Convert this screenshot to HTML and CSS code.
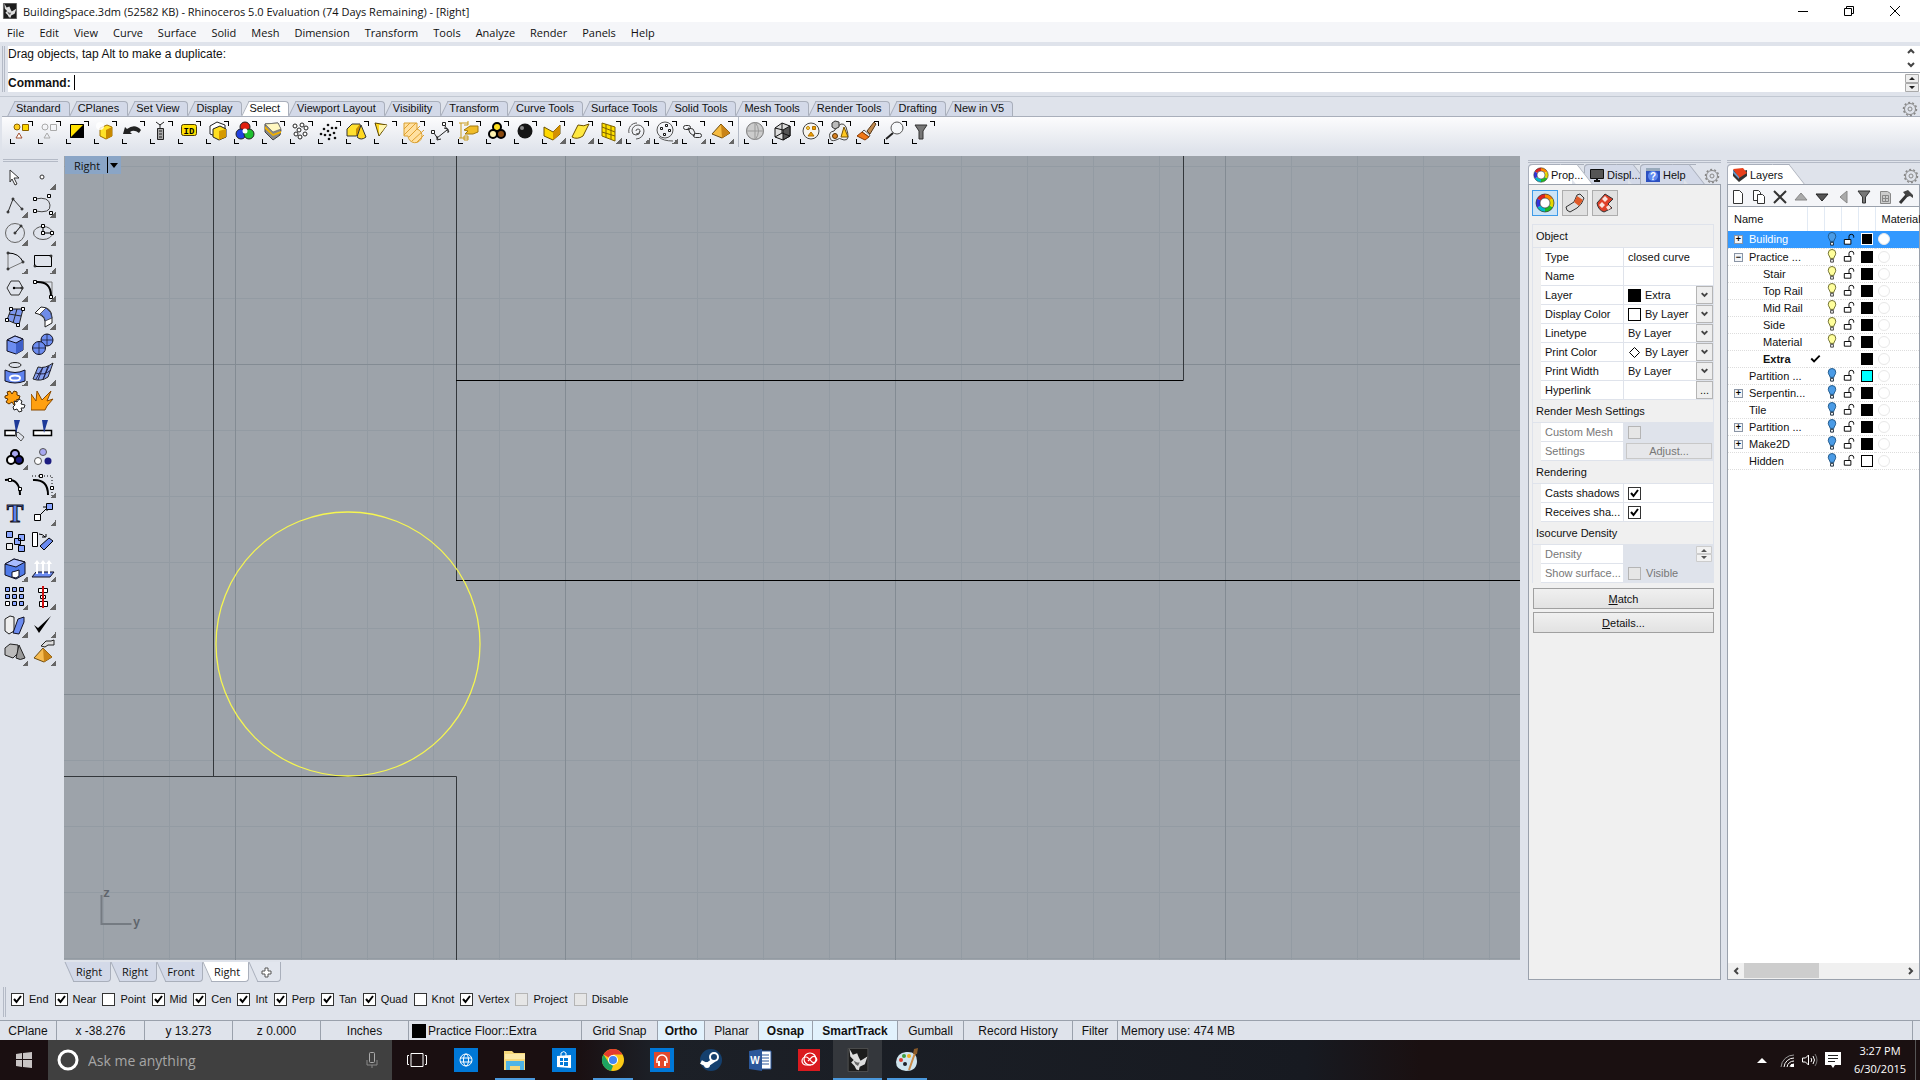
FILE: index.html
```
<!DOCTYPE html>
<html lang="en">
<head>
    <meta charset="UTF-8">
    <meta name="viewport" content="width=device-width, initial-scale=1.0">
    <title>BuildingSpace.3dm (52582 KB) - Rhinoceros 5.0 Evaluation (74 Days Remaining) - [Right]</title>
    <link rel="stylesheet" href="styles.css">
</head>
<body>
    <!-- shared symbols -->
    <svg class="defs" width="0" height="0">
        <symbol id="bulb-on" viewBox="0 0 12 16"><path d="M4 10C4 8 2 7 2 4.500a4 4 0 0 1 8 0C10 7 8 8 8 10z" fill="#ffff9c" stroke="#6b6a2a"/><path d="M4.500 11h3v3h-3z" fill="#eee" stroke="#444"/></symbol>
        <symbol id="bulb-off" viewBox="0 0 12 16"><path d="M4 10C4 8 2 7 2 4.500a4 4 0 0 1 8 0C10 7 8 8 8 10z" fill="#4a9be6" stroke="#1f5688"/><path d="M4.500 11h3v3h-3z" fill="#fff" stroke="#123"/></symbol>
        <symbol id="lock" viewBox="0 0 12 16"><path d="M1 8h7v5H1z" fill="#fff" stroke="#000"/><path d="M6 8V4.500q0-2 2.500-2t2.500 2V6" fill="none" stroke="#000"/></symbol>
        <symbol id="chevron" viewBox="0 0 16 16"><path d="M5 6l3 3 3-3" fill="none" stroke="#444" stroke-width="2"/></symbol>
        <symbol id="gear" viewBox="0 0 16 16"><circle cx="8" cy="8" r="5.500" fill="none" stroke="#888" stroke-width="1"/><circle cx="8" cy="8" r="6.500" fill="none" stroke="#888" stroke-width="1.500" stroke-dasharray="2 2"/><circle cx="8" cy="8" r="2" fill="none" stroke="#888"/></symbol>
        <symbol id="wheel" viewBox="0 0 20 20"><g fill="none" stroke-width="4"><path d="M10 3a7 7 0 0 1 6 3.500" stroke="#f80"/><path d="M16 6.500a7 7 0 0 1 0 7" stroke="#e6d800"/><path d="M16 13.500a7 7 0 0 1-6 3.500" stroke="#2b2"/><path d="M10 17a7 7 0 0 1-6-3.500" stroke="#0bc"/><path d="M4 13.500a7 7 0 0 1 0-7" stroke="#33d"/><path d="M4 6.500A7 7 0 0 1 10 3" stroke="#d22"/></g><circle cx="10" cy="10" r="9" fill="none" stroke="#333" stroke-width=".7"/><circle cx="10" cy="10" r="5" fill="#fff" stroke="#333" stroke-width=".7"/></symbol>
        <symbol id="rhino" viewBox="0 0 24 28"><path d="M.5.5h23v27H.5z" fill="#1c1c1c" stroke="#555"/><path d="M2 1l4 7 5-2 2 5 2 4 8-5-3 9-6 3-1 4-3-1-2-4-4-4 3-3-4-4z" fill="#ddd"/><path d="M7 15l4 2 3 0-2 4-3-2z" fill="#666"/></symbol>
    </svg>

    <header class="titlebar">
        <svg class="app-icon" width="16" height="16"><use href="#rhino"/></svg>
        <h1>BuildingSpace.3dm (52582 KB) - Rhinoceros 5.0 Evaluation (74 Days Remaining) - [Right]</h1>
        <div class="window-buttons">
            <button aria-label="Minimize"><svg width="12" height="12"><path d="M1 6.500h10" stroke="#000"/></svg></button>
            <button aria-label="Restore"><svg width="12" height="12"><path d="M1.500 3.500h7v7h-7zM3.500 3.500v-2h7v7h-2" fill="none" stroke="#000"/></svg></button>
            <button aria-label="Close"><svg width="12" height="12"><path d="M1 1l10 10M11 1L1 11" stroke="#000"/></svg></button>
        </div>
    </header>

    <nav class="menu">
        <a href="#">File</a><a href="#">Edit</a><a href="#">View</a><a href="#">Curve</a><a href="#">Surface</a><a href="#">Solid</a><a href="#">Mesh</a><a href="#">Dimension</a><a href="#">Transform</a><a href="#">Tools</a><a href="#">Analyze</a><a href="#">Render</a><a href="#">Panels</a><a href="#">Help</a>
    </nav>

    <section class="command">
        <div class="history">
            <span>Drag objects, tap Alt to make a duplicate:</span>
            <svg width="16" height="24"><path d="M5 7l3-3 3 3M5 17l3 3 3-3" fill="none" stroke="#444" stroke-width="2"/></svg>
        </div>
        <div class="prompt">
            <label for="cmd">Command:</label>
            <span class="caret"></span>
            <input type="text" id="cmd">
            <svg width="14" height="18"><path d="M.5.5h13v8H.5zM.5 9.500h13v8H.5z" fill="#eee" stroke="#aaa"/><path d="M4 6h6L7 3zM4 12h6l-3 3z" fill="#222"/></svg>
        </div>
    </section>

    <section class="ribbon">
        <div class="tabs">
            <button class="tab">Standard</button><button class="tab">CPlanes</button><button class="tab">Set View</button><button class="tab">Display</button><button class="tab active">Select</button><button class="tab">Viewport Layout</button><button class="tab">Visibility</button><button class="tab">Transform</button><button class="tab">Curve Tools</button><button class="tab">Surface Tools</button><button class="tab">Solid Tools</button><button class="tab">Mesh Tools</button><button class="tab">Render Tools</button><button class="tab">Drafting</button><button class="tab">New in V5</button>
            <svg class="tabs-gear" width="16" height="16"><use href="#gear"/></svg>
        </div>
        <div class="toolbar">
            <button class="tool" aria-label="All objects"><svg viewBox="0 0 28 30"><circle cx="9" cy="10" r="3" fill="#ffcf20" stroke="#8a6200"/><path d="M14.500 7.500h6v6h-6z" fill="#ffd800" stroke="#8a6200"/><path d="M11 16l3 5H8z" fill="#fff" stroke="#a05030"/></svg></button>
            <button class="tool" aria-label="None"><svg viewBox="0 0 28 30"><g fill="none" stroke="#aaa"><circle cx="9" cy="10" r="3"/><path d="M14.500 7.500h6v6h-6zM11 16l3 5H8z"/></g></svg></button>
            <button class="tool" aria-label="Invert"><svg viewBox="0 0 28 30"><path d="M6.500 7.500h13v13h-13z" fill="#ffe000" stroke="#000"/><path d="M20 7v14H6z"/></svg></button>
            <button class="tool" aria-label="Last created"><svg viewBox="0 0 28 30"><path d="M8 11l7-3 5 2v9l-6 3-6-3z" fill="#ffe228" stroke="#a07000"/><path d="M14 13l6-3v9l-6 3z" fill="#c98900"/><circle cx="8" cy="9" r="4" fill="#fff" opacity=".8"/></svg></button>
            <button class="tool" aria-label="Previous"><svg viewBox="0 0 28 30"><path d="M3 17l2-7 2 2q8-6 14 1l-2 3q-5-4-9-1l2 2z" fill="#222"/></svg></button>
            <button class="tool" aria-label="Filter"><svg viewBox="0 0 28 30"><path d="M9.500 11.500h6v11h-6z" fill="#aaa" stroke="#222"/><path d="M12 11V7M8 5l4 3 4-3M11 14h3M11 17h3M11 20h3" fill="none" stroke="#222"/></svg></button>
            <button class="tool" aria-label="By ID"><svg viewBox="0 0 28 30"><rect x="5.500" y="7.500" width="15" height="11" rx="2" fill="#ffe000" stroke="#4c3b00"/><text x="13" y="17" class="id-text">ID</text></svg></button>
            <button class="tool" aria-label="Duplicates"><svg viewBox="0 0 28 30"><path d="M6 9l7-4 8 3v9l-7 3-8-3z" fill="#fff" stroke="#222"/><path d="M9 12l7-3 6 3v8l-7 3-6-3z" fill="#ffdf20" stroke="#222"/><path d="M15 14l7-2v8l-7 3z" fill="#d59a00"/></svg></button>
            <button class="tool" aria-label="By color"><svg viewBox="0 0 28 30"><circle cx="13" cy="10" r="5" fill="#e02010" stroke="#222"/><circle cx="9" cy="17" r="5" fill="#2040e0" stroke="#222"/><circle cx="17" cy="17" r="5" fill="#20c030" stroke="#222"/><circle cx="13" cy="14" r="2.500" fill="#fff"/></svg></button>
            <button class="tool" aria-label="By layer"><svg viewBox="0 0 28 30"><path d="M5 7l13-1 3 7-1 5-7 5-8-8z" fill="#888" stroke="#444"/><path d="M5 7l8 8 8-3-3-6z" fill="#fff7c0" stroke="#666" stroke-width=".7"/><path d="M5 9l8 8 8-3v2l-8 3-8-7z" fill="#f0b000"/></svg></button>
            <button class="tool" aria-label="Points"><svg viewBox="0 0 28 30"><g fill="#fff" stroke="#222"><circle cx="7" cy="9" r="2"/><circle cx="14" cy="8" r="2"/><circle cx="11" cy="13" r="2"/><circle cx="18" cy="11" r="2"/><circle cx="8" cy="17" r="2"/><circle cx="17" cy="17" r="2"/><circle cx="12" cy="20" r="2"/></g></svg></button>
            <button class="tool" aria-label="Point clouds"><svg viewBox="0 0 28 30"><g fill="#111"><circle cx="12" cy="8" r="1.300"/><circle cx="16" cy="11" r="1.300"/><circle cx="8" cy="12" r="1.300"/><circle cx="12" cy="14" r="1.300"/><circle cx="5" cy="17" r="1.300"/><circle cx="9" cy="18" r="1.300"/><circle cx="14" cy="18" r="1.300"/><circle cx="18" cy="16" r="1.300"/><circle cx="19" cy="21" r="1.300"/><circle cx="13" cy="22" r="1.300"/><circle cx="20" cy="11" r="1.300"/></g></svg></button>
            <button class="tool" aria-label="Solids"><svg viewBox="0 0 28 30"><path d="M3 12l5-5h8v7l-4 5H3z" fill="#ffe030" stroke="#333"/><path d="M12 12l4-5v7l-4 5z" fill="#c98f00"/><path d="M17 8l5 12q-5 4-9 0z" fill="#ffd820" stroke="#333"/></svg></button>
            <button class="tool" aria-label="Cones"><svg viewBox="0 0 28 30"><path d="M3 6l12 2-8 11z" fill="#ffd820" stroke="#5a4500"/><path d="M7 8l8 0-8 10z" fill="#fff6b0"/></svg></button>
            <button class="tool" aria-label="Hatches"><svg viewBox="0 0 28 30"><path d="M4 6h13v6a7 7 0 1 1-9 7H4z" fill="#ffe0a0" stroke="#d9a030"/><path d="M4 12l6-6M4 18L16 6M9 20L20 9M12 24l12-11M16 26l8-8" stroke="#e0a030" fill="none"/></svg></button>
            <button class="tool" aria-label="Curves"><svg viewBox="0 0 28 30"><path d="M6 16l4 6M9 21l10-8M17 9l4 6M13 22l-4 1V19M16 11l4 1v4" fill="none" stroke="#222"/><path d="M3.500 13.500h3v3h-3zM14.500 5.500h3v3h-3z" fill="#fff" stroke="#222"/></svg></button>
            <button class="tool" aria-label="Dimensions"><svg viewBox="0 0 28 30"><path d="M3 6h9M3 21h9M5 6v15M12 4v4h-4M8 19h4v4H8z" fill="none" stroke="#c99a18"/><path d="M8 13l6-4h8v6l-5 2H9l3-3z" fill="#f0bc28" stroke="#a07810"/></svg></button>
            <button class="tool" aria-label="Groups"><svg viewBox="0 0 28 30"><g stroke="#000" stroke-width="2"><circle cx="13" cy="10" r="4" fill="#ffe020"/><circle cx="9" cy="17" r="4" fill="#fff3b0"/><circle cx="17" cy="17" r="4" fill="#8a4a10"/></g></svg></button>
            <button class="tool" aria-label="Blocks"><svg viewBox="0 0 28 30"><circle cx="13" cy="14" r="7.500" fill="#161616"/><circle cx="10" cy="11" r="2" fill="#888"/></svg></button>
            <button class="tool more" aria-label="Polysurfaces"><svg viewBox="0 0 28 30"><path d="M4 10l9 5 7-7v9l-7 6-9-4z" fill="#ffd800" stroke="#6b5000"/><path d="M13 15l7-7v9l-7 6z" fill="#d49000"/></svg></button>
            <button class="tool more" aria-label="Surfaces"><svg viewBox="0 0 28 30"><path d="M10 8q6 2 11-1l-6 12q-6 4-11 1z" fill="#ffe840" stroke="#6b5000"/></svg></button>
            <button class="tool more" aria-label="Meshes"><svg viewBox="0 0 28 30"><path d="M6 6l13 4v14L6 19z" fill="#ffe000" stroke="#7c6000"/><path d="M10 7v14M15 9v13M6 10l13 5M6 15l13 4" stroke="#7c6000" fill="none"/></svg></button>
            <button class="tool more" aria-label="Spirals"><svg viewBox="0 0 28 30"><path d="M12 14a2 2 0 0 1 4 0a4 4 0 0 1-8 0a6 6 0 0 1 12 0a8 8 0 0 1-8 8M16 14q0 3-4 3M5 16a8 8 0 0 1 8-10" fill="none" stroke="#555"/></svg></button>
            <button class="tool more" aria-label="Point sets"><svg viewBox="0 0 28 30"><circle cx="13" cy="13" r="8" fill="none" stroke="#555"/><path d="M7 20q4 4 14 4" fill="none" stroke="#555"/><g fill="#fff" stroke="#111"><path d="M8.500 10.500h2v2h-2zM13.500 7.500h2v2h-2zM16.500 12.500h2v2h-2zM11.500 16.500h2v2h-2z"/></g></svg></button>
            <button class="tool more" aria-label="Chains"><svg viewBox="0 0 28 30"><g fill="none" stroke="#333"><rect x="3.500" y="8.500" width="7" height="4" rx="2"/><rect x="13.500" y="16.500" width="8" height="4" rx="2"/><path d="M8 11l5 1 2 4-1 3-4-3z"/></g></svg></button>
            <button class="tool more" aria-label="Pyramids"><svg viewBox="0 0 28 30"><path d="M13 7l9 9-8 5-10-4z" fill="#f6bb40" stroke="#6b4a10"/><path d="M13 7l9 9-8 5z" fill="#c98418"/></svg></button>
            <span class="tool-sep"></span>
            <button class="tool" aria-label="Sphere"><svg viewBox="0 0 28 30"><circle cx="13" cy="14" r="8.500" fill="#ccc" stroke="#777"/><path d="M13 5v18M4 14h18M13 5q7 9 0 18" fill="none" stroke="#999"/></svg></button>
            <button class="tool" aria-label="Cube"><svg viewBox="0 0 28 30"><path d="M5 11l7-5 8 3v10l-7 4-8-3z" fill="#ddd" stroke="#111"/><path d="M13 13l7-4v10l-7 4z" fill="#555" stroke="#111"/><path d="M5 11l8 2M12 6v10l-7 4M12 16l8 3" stroke="#111" fill="none"/></svg></button>
            <button class="tool" aria-label="Sets"><svg viewBox="0 0 28 30"><circle cx="13" cy="14" r="8" fill="#f6f4ee" stroke="#444"/><circle cx="10" cy="11" r="1.500" fill="#ffe060" stroke="#c08000"/><path d="M14.500 9.500h3v3h-3zM13 15l3 4h-6z" fill="#f0a000" stroke="#b07000"/></svg></button>
            <button class="tool" aria-label="Object groups"><svg viewBox="0 0 28 30"><path d="M4 21q-2-6 4-7 8-12 12-4 5 14-2 13-5-3-8 0-5 2-6-2z" fill="#eee" stroke="#444"/><path d="M6 6l3-2 4 1v5l-4 2-3-2z" fill="#bbb" stroke="#333"/><circle cx="9" cy="19" r="2.500" fill="#d98020" stroke="#5a3300"/><path d="M18 10l4 10h-7z" fill="#ffc820" stroke="#7a5500"/></svg></button>
            <button class="tool" aria-label="Brush"><svg viewBox="0 0 28 30"><path d="M20 5l2 2-6 10-3-3z" fill="#c08a50" stroke="#5a3a18"/><path d="M10 13l6 5-1 2-7-5z" fill="#eee" stroke="#555"/><path d="M8 15l7 5-4 3-8-4z" fill="#f07818" stroke="#8a3a00"/></svg></button>
            <button class="tool" aria-label="Zoom"><svg viewBox="0 0 28 30"><circle cx="15" cy="11" r="6" fill="#f6f8fa" stroke="#555"/><path d="M11 16l-7 6" stroke="#222" stroke-width="2"/></svg></button>
            <button class="tool" aria-label="Funnel"><svg viewBox="0 0 28 30"><path d="M5 8h12l-4 6v8H9v-8z" fill="#777" stroke="#333"/></svg></button>
        </div>
    </section>

    <main class="workspace">
        <aside class="side-tools">
            <div class="grip"></div>
            <div class="side-grid">
                <button class="stool" aria-label="Pointer"><svg viewBox="0 0 28 28"><path d="M7 7l9 8h-5l3 6-2 1-3-6-2 3z" fill="#fff" stroke="#333"/></svg></button>
                <button class="stool more" aria-label="Point"><svg viewBox="0 0 28 28"><circle cx="11" cy="14" r="2" fill="#fff" stroke="#333"/></svg></button>
                <button class="stool more" aria-label="Polyline"><svg viewBox="0 0 28 28"><path d="M5 21l5-13 9 10" fill="none" stroke="#333"/><g fill="#fff" stroke="#000"><circle cx="5" cy="21" r="1"/><circle cx="10" cy="8" r="1"/><circle cx="19" cy="18" r="1"/></g></svg></button>
                <button class="stool more" aria-label="Curve"><svg viewBox="0 0 28 28"><path d="M4 8q14-3 15 6t-15 6" fill="none" stroke="#444"/><path d="M2.500 6.500h3v3h-3zM16.500 3.500h3v3h-3zM2.500 18.500h3v3h-3zM18.500 20.500h3v3h-3z" fill="#fff" stroke="#000"/></svg></button>
                <button class="stool more" aria-label="Circle"><svg viewBox="0 0 28 28"><circle cx="12" cy="14" r="9.500" fill="none" stroke="#666"/><path d="M12 14l6-7" stroke="#000"/><circle cx="12" cy="14" r="1" fill="#fff" stroke="#000"/><circle cx="18" cy="7" r="1" fill="#fff" stroke="#000"/></svg></button>
                <button class="stool more" aria-label="Ellipse"><svg viewBox="0 0 28 28"><ellipse cx="12" cy="14" rx="9.500" ry="6.500" fill="none" stroke="#555"/><path d="M12 7v7h9" fill="none" stroke="#000"/><path d="M10.500 5.500h3v3h-3zM10.500 12.500h3v3h-3zM19.500 12.500h3v3h-3z" fill="#fff" stroke="#000"/></svg></button>
                <button class="stool more" aria-label="Arc"><svg viewBox="0 0 28 28"><path d="M5 6q11 0 15 9" fill="none" stroke="#000"/><path d="M5 6v16l15-7" fill="none" stroke="#777"/><g fill="#fff" stroke="#000"><circle cx="5" cy="6" r="1"/><circle cx="20" cy="15" r="1"/><circle cx="5" cy="22" r="1"/></g></svg></button>
                <button class="stool more" aria-label="Rectangle"><svg viewBox="0 0 28 28"><path d="M3.500 8.500h17v11h-17z" fill="none" stroke="#000"/><circle cx="20" cy="9" r="1" fill="#fff" stroke="#000"/><circle cx="4" cy="19" r="1" fill="#fff" stroke="#000"/></svg></button>
                <button class="stool more" aria-label="Polygon"><svg viewBox="0 0 28 28"><path d="M4 13l4-7h8l4 7-4 7H8z" fill="none" stroke="#333"/><path d="M11 13h8" stroke="#000"/><circle cx="11" cy="13" r="1.200"/><circle cx="19" cy="13" r="1" fill="#fff" stroke="#000"/></svg></button>
                <button class="stool more" aria-label="Fillet"><svg viewBox="0 0 28 28"><path d="M5 7h16v15" fill="none" stroke="#777"/><path d="M5 7q15-1 15 14" fill="none" stroke="#000" stroke-width="2"/><path d="M2.500 5.500h3v3h-3zM18.500 20.500h3v3h-3z" fill="#fff" stroke="#000"/></svg></button>
                <button class="stool more" aria-label="Surface"><svg viewBox="0 0 28 28"><path d="M8 6h12l-4 16-12-5z" fill="#7d97ee" stroke="#222"/><path d="M14 6l-4 14M6 11l12 2" stroke="#222"/><path d="M6.500 4.500h3v3h-3zM18.500 4.500h3v3h-3zM2.500 15.500h3v3h-3zM13.500 20.500h3v3h-3z" fill="#fff" stroke="#000"/></svg></button>
                <button class="stool more" aria-label="Blend surface"><svg viewBox="0 0 28 28"><path d="M4 10l6-6q11 0 11 11v5l-7 4v-6q-1-6-10-8z" fill="#fff" stroke="#222"/><path d="M9 11l6-6q6 4 6 10l-7 3q0-5-5-7z" fill="#6f8ce8" stroke="#222" stroke-width=".7"/></svg></button>
                <button class="stool more" aria-label="Box"><svg viewBox="0 0 28 28"><path d="M4 9l8-4 8 3v11l-7 4-9-3z" fill="#6c8cf0" stroke="#112"/><path d="M13 12l7-4v11l-7 4z" fill="#3f5fc8"/><path d="M4 9l8-4 8 3-7 4z" fill="#a8bcff" stroke="#112"/></svg></button>
                <button class="stool more" aria-label="Boolean"><svg viewBox="0 0 28 28"><g fill="#6c8cf0" stroke="#112"><circle cx="16" cy="9" r="6"/><circle cx="8" cy="17" r="6.500"/></g><path d="M2 17h13M8 11v12M10 9h12M16 3v12" stroke="#112" stroke-width=".7"/></svg></button>
                <button class="stool more" aria-label="Project"><svg viewBox="0 0 28 28"><ellipse cx="12" cy="6" rx="6" ry="2.500" fill="none" stroke="#222"/><path d="M2 11q10 5 20 0v11q-10 4-20 0z" fill="#5f83ee" stroke="#112"/><ellipse cx="12" cy="19" rx="5" ry="2.500" fill="none" stroke="#fff" stroke-width="2"/></svg></button>
                <button class="stool more" aria-label="Mesh"><svg viewBox="0 0 28 28"><path d="M7 8q7 2 15-4l-5 14q-7 5-15 2z" fill="#86a0f0" stroke="#222"/><path d="M5 14q8 3 15-3M12 8l-5 13M17 7l-5 14M5 20l7-12M12 20l6-13" fill="none" stroke="#224"/></svg></button>
                <button class="stool" aria-label="Join"><svg viewBox="0 0 28 28"><path d="M2 9l3-1-1-3 3-1 2 3 2-3 3 1v3l3 1-1 3-3 1 1 4-3 1-2-3-3 2-3-2 2-3-3-1z" fill="#ffa010" stroke="#5a3000"/><path d="M11 14l3 1 2-3 3 2-1 3 4 1-1 3-3 0 1 3-3 1-2-3-3 1-1-3 2-2z" fill="#fff" stroke="#222"/></svg></button>
                <button class="stool" aria-label="Explode"><svg viewBox="0 0 28 28"><path d="M0 23V7l5 7 1-10 5 9 9-9-4 10 6-2-6 7-2 4z" fill="#ffa010" stroke="#8a4a00"/></svg></button>
                <button class="stool" aria-label="Trim"><svg viewBox="0 0 28 28"><path d="M2 15.500h11v5H2z" fill="#fff" stroke="#000" stroke-width="1.500"/><path d="M11 5h6l-4 13z" fill="#1d3a98"/><path d="M12 20l3-3 6 5-3 4z" fill="none" stroke="#555"/></svg></button>
                <button class="stool" aria-label="Split"><svg viewBox="0 0 28 28"><path d="M2.500 15.500h18v5h-18z" fill="#fff" stroke="#000" stroke-width="1.500"/><path d="M11 5h6l-4 13z" fill="#1d3a98"/></svg></button>
                <button class="stool more" aria-label="Group"><svg viewBox="0 0 28 28"><g stroke="#000" stroke-width="2"><circle cx="12" cy="11" r="4" fill="#a8a8f0"/><circle cx="8" cy="17" r="4" fill="#fff"/><circle cx="16" cy="17" r="4" fill="#1c1c80"/></g></svg></button>
                <button class="stool" aria-label="Ungroup"><svg viewBox="0 0 28 28"><circle cx="12" cy="9" r="3.500" fill="#a8a8f0" stroke="#555"/><circle cx="7" cy="18" r="3.500" fill="#fff" stroke="#555"/><circle cx="17" cy="18" r="3.500" fill="#1c1c80"/></svg></button>
                <button class="stool" aria-label="Control points"><svg viewBox="0 0 28 28"><path d="M2 9q15-2 15 15" fill="none" stroke="#000" stroke-width="2"/><path d="M5.500 7.500h3v3h-3zM15.500 16.500h3v3h-3z" fill="#fff" stroke="#000"/></svg></button>
                <button class="stool more" aria-label="Edit points"><svg viewBox="0 0 28 28"><path d="M2 9q15-1 15 15" fill="none" stroke="#000" stroke-width="2"/><path d="M1 5h20v20" fill="none" stroke="#000" stroke-dasharray="1 2"/><path d="M8.500 3.500h3v3h-3zM19.500 15.500h3v3h-3z" fill="#fff" stroke="#000"/></svg></button>
                <button class="stool" aria-label="Text"><svg viewBox="0 0 28 28"><text x="12" y="23" class="t-text">T</text></svg></button>
                <button class="stool more" aria-label="Scale"><svg viewBox="0 0 28 28"><path d="M9 16l7-7M12 8h4v4" fill="none" stroke="#000"/><path d="M3.500 15.500h6v6h-6z" fill="#fff" stroke="#000"/><path d="M15.500 4.500h6v6h-6z" fill="#8aa6ff" stroke="#000"/></svg></button>
                <button class="stool" aria-label="Copy"><svg viewBox="0 0 28 28"><g fill="#8aa6ff" stroke="#000"><path d="M3.500 4.500h6v6h-6zM15.500 7.500h6v6h-6zM11.500 11.500h6v6h-6zM15.500 18.500h6v6h-6z"/></g><path d="M3.500 16.500h6v6h-6z" fill="#eee" stroke="#000"/></svg></button>
                <button class="stool" aria-label="Rotate"><svg viewBox="0 0 28 28"><path d="M1.500 5.500h5v14h-5z" fill="#fff" stroke="#000"/><path d="M8 7q4 0 6 3M11 10h4V7" fill="none" stroke="#000"/><path d="M9 19l9-8 4 3-9 9z" fill="#6c8cf0" stroke="#000"/></svg></button>
                <button class="stool more" aria-label="Boolean solids"><svg viewBox="0 0 28 28"><path d="M2 9l9-5 11 3v12l-9 5-11-4z" fill="#4f7ae8" stroke="#112"/><path d="M2 9l9-5 11 3-9 5z" fill="#a8bcff" stroke="#112"/><path d="M9 17l4-1 3-1v6l-3 2-4-1z" fill="#fff" stroke="#112"/></svg></button>
                <button class="stool more" aria-label="Extrude"><svg viewBox="0 0 28 28"><path d="M5 17h18l-4 5H1z" fill="#6c8cf0" stroke="#112"/><path d="M6 19V9M12 19V9M18 19V9" stroke="#fff" stroke-width="2"/><path d="M3 9h6L6 5zM9 9h6l-3-4zM15 9h6l-3-4z" fill="#fff"/></svg></button>
                <button class="stool more" aria-label="Array"><svg viewBox="0 0 28 28"><path d="M2.500 4.500h4v4h-4zM9.500 4.500h4v4h-4zM16.500 4.500h4v4h-4zM2.500 11.500h4v4h-4zM9.500 11.500h4v4h-4zM16.500 11.500h4v4h-4zM9.500 18.500h4v4h-4zM16.500 18.500h4v4h-4z" fill="#8aa6ff" stroke="#000"/><path d="M2.500 18.500h4v4h-4z" fill="#fff" stroke="#000"/></svg></button>
                <button class="stool more" aria-label="Align"><svg viewBox="0 0 28 28"><path d="M7.500 5.500h9v4h-9zM9.500 12.500h5v3h-5zM8.500 18.500h8v5h-8z" fill="#fff" stroke="#000"/><path d="M12 3v22" stroke="#d01010" stroke-width="2"/></svg></button>
                <button class="stool more" aria-label="Orient"><svg viewBox="0 0 28 28"><path d="M2 8l5-3 4 1v14l-5 3-4-3z" fill="#eee" stroke="#222"/><path d="M15 8l6-2v5l-5 12-6-1z" fill="#6c8cf0" stroke="#112"/></svg></button>
                <button class="stool more" aria-label="Check"><svg viewBox="0 0 28 28"><path d="M3 14l4 3L20 5 8 22z"/></svg></button>
                <button class="stool more" aria-label="Analyze"><svg viewBox="0 0 28 28"><path d="M2 9l5-4 8 1v8l-5 5-8-3z" fill="#bbb" stroke="#222"/><path d="M16 6l6 13q-5 3-9 0z" fill="#999" stroke="#222"/></svg></button>
                <button class="stool more" aria-label="Render"><svg viewBox="0 0 28 28"><path d="M12 9l9 9-8 5-10-4z" fill="#f6bb50" stroke="#6b4a10"/><path d="M12 9l9 9-8 5z" fill="#c98418"/><path d="M10 7l5-5h5l3-1v5h-6l-3 2z" fill="#ddd" stroke="#222"/></svg></button>
            </div>
        </aside>

        <section class="view-area">
            <div class="viewport">
                <svg class="scene">
                    <defs>
                        <pattern id="minor" x="171" y="208" width="66" height="66" patternUnits="userSpaceOnUse"><path d="M.5 0v66M0 .5h66" stroke="#939ba3"/></pattern>
                        <pattern id="major" x="171" y="208" width="330" height="330" patternUnits="userSpaceOnUse"><path d="M.5 0v330M0 .5h330" stroke="#838b93"/></pattern>
                    </defs>
                    <rect width="100%" height="100%" fill="url(#minor)"/>
                    <rect width="100%" height="100%" fill="url(#major)"/>
                    <g fill="none" stroke="#33373b">
                        <path d="M149.500 0v620M0 620.500h392.500V2000M392.500 0v424.500H3000"/>
                        <path d="M392 224.500h727.500V0"/>
                    </g>
                    <path d="M392 224.500h727M392 424.500h3000" stroke="#000"/>
                    <circle cx="284" cy="488" r="132" fill="none" stroke="#f6f650" stroke-width="1.300"/>
                </svg>
                <button class="view-label">Right<svg width="14" height="16"><path d="M2.500 0v16" stroke="#000"/><path d="M5 6h8l-4 5z"/></svg></button>
                <svg class="axes" width="60" height="50"><path d="M7.500 12v29h30" fill="none" stroke="#757b82" stroke-width="2"/><text x="9" y="14">z</text><text x="39" y="43">y</text></svg>
            </div>
            <div class="view-tabs">
                <button class="vtab">Right</button><button class="vtab">Right</button><button class="vtab">Front</button><button class="vtab active">Right</button><button class="vtab plus" aria-label="Add"><svg width="11" height="11"><path d="M4 1h3v3h3v3H7v3H4V7H1V4h3z" fill="#fff" stroke="#555"/></svg></button>
            </div>
        </section>

        <aside class="panel properties">
            <div class="panel-tabs">
                <button class="ptab active"><svg width="16" height="16"><use href="#wheel"/></svg>Prop...</button><button class="ptab"><svg width="16" height="16"><path d="M1.500 2.500h13v9h-13z" fill="#555" stroke="#111"/><path d="M5 14h6M8 11v3" stroke="#111" stroke-width="2"/></svg>Displ...</button><button class="ptab"><svg width="16" height="16"><path d="M1 1h14v14H1z" fill="#2c50c0"/><path d="M1 1h14v3H1z" fill="#9ab"/><circle cx="8" cy="9" r="5" fill="#5f8af0"/><text x="8" y="13" class="help-text">?</text></svg>Help</button>
                <svg class="gear" width="16" height="16"><use href="#gear"/></svg>
            </div>
            <div class="panel-body">
                <div class="modes">
                    <button class="mode on" aria-label="Object"><svg width="20" height="20"><use href="#wheel"/></svg></button>
                    <button class="mode" aria-label="Material"><svg width="20" height="20"><path d="M1 14l8-5 3-7 3-1 4 4q-2 7-7 10l-7 4q-4-1-4-5z" fill="#ddd" stroke="#333"/><path d="M9 9l3-6 6 4-4 6z" fill="#e05a28"/></svg></button>
                    <button class="mode" aria-label="Texture mapping"><svg width="20" height="20"><path d="M2 10l8-9 8 5-5 5 4 4-8 4q-6-2-7-9z" fill="#e04028" stroke="#333"/><path d="M7 6l3-3 3 3-3 3zM4 12l3-3 3 3-3 3zM11 14l3-2 2 3-3 2z" fill="#fbe3dc"/></svg></button>
                </div>
                <div class="props">
                    <h2>Object</h2>
                    <div class="prop"><span class="name">Type</span><span class="value">closed curve</span></div>
                    <div class="prop"><label class="name" for="p-name">Name</label><span class="value"><input type="text" id="p-name"></span></div>
                    <div class="prop"><label class="name" for="p-layer">Layer</label><span class="value"><i class="swatch black"></i><select id="p-layer"><option>Extra</option></select><svg class="drop"><use href="#chevron"/></svg></span></div>
                    <div class="prop"><label class="name" for="p-color">Display Color</label><span class="value"><i class="swatch"></i><select id="p-color"><option>By Layer</option></select><svg class="drop"><use href="#chevron"/></svg></span></div>
                    <div class="prop"><label class="name" for="p-line">Linetype</label><span class="value"><select id="p-line"><option>By Layer</option></select><svg class="drop"><use href="#chevron"/></svg></span></div>
                    <div class="prop"><label class="name" for="p-print">Print Color</label><span class="value"><svg class="diamond" width="13" height="13"><path d="M6.500 1.500l5 5-5 5-5-5z" fill="#fff" stroke="#000"/></svg><select id="p-print"><option>By Layer</option></select><svg class="drop"><use href="#chevron"/></svg></span></div>
                    <div class="prop"><label class="name" for="p-width">Print Width</label><span class="value"><select id="p-width"><option>By Layer</option></select><svg class="drop"><use href="#chevron"/></svg></span></div>
                    <div class="prop"><label class="name" for="p-link">Hyperlink</label><span class="value"><input type="text" id="p-link"><button class="dots">...</button></span></div>
                    <h2>Render Mesh Settings</h2>
                    <div class="prop off"><label class="name" for="p-mesh">Custom Mesh</label><span class="value"><input type="checkbox" id="p-mesh" disabled></span></div>
                    <div class="prop off"><span class="name">Settings</span><span class="value"><button class="adjust" disabled>Adjust...</button></span></div>
                    <h2>Rendering</h2>
                    <div class="prop"><label class="name" for="p-cast">Casts shadows</label><span class="value"><input type="checkbox" id="p-cast" checked></span></div>
                    <div class="prop"><label class="name" for="p-recv">Receives sha...</label><span class="value"><input type="checkbox" id="p-recv" checked></span></div>
                    <h2>Isocurve Density</h2>
                    <div class="prop off"><span class="name">Density</span><span class="value"><svg class="spin" width="16" height="16"><path d="M.5.5h15v7H.5zM.5 8.500h15v7H.5z" fill="#f2f2f2" stroke="#ccc"/><path d="M5 6h6L8 3zM5 10h6l-3 3z" fill="#555"/></svg></span></div>
                    <div class="prop off"><span class="name">Show surface...</span><span class="value"><input type="checkbox" id="p-vis" disabled><label for="p-vis">Visible</label></span></div>
                </div>
                <button class="wide"><u>M</u>atch</button>
                <button class="wide"><u>D</u>etails...</button>
            </div>
        </aside>

        <aside class="panel layers">
            <div class="panel-tabs">
                <button class="ptab active"><svg width="16" height="16"><path d="M1 3l6 2 8-2v6l-8 6-6-6z" fill="#333"/><path d="M1 2l10-1 4 5-8 5z" fill="#e8401c"/><path d="M1 3l6 7v2L1 6z" fill="#69c"/></svg>Layers</button>
                <svg class="gear" width="16" height="16"><use href="#gear"/></svg>
            </div>
            <div class="panel-body">
                <div class="layer-tools">
                    <button aria-label="New layer"><svg width="16" height="16"><path d="M3.500 1.500h6l3 3v10h-9z" fill="#fff" stroke="#333"/></svg></button>
                    <button aria-label="New sublayer"><svg width="16" height="16"><path d="M2.500 1.500h5l2 2v8h-7z" fill="#fff" stroke="#333"/><path d="M6.500 5.500h5l2 2v7h-7z" fill="#fff" stroke="#333"/></svg></button>
                    <button aria-label="Delete"><svg width="16" height="16"><path d="M2 2l12 12M14 2L2 14" stroke="#333" stroke-width="2"/></svg></button>
                    <button aria-label="Move up"><svg width="16" height="16"><path d="M2 11h12L8 4z" fill="#aaa" stroke="#888"/></svg></button>
                    <button aria-label="Move down"><svg width="16" height="16"><path d="M2 5h12l-6 7z" fill="#555" stroke="#222"/></svg></button>
                    <button aria-label="Move left"><svg width="16" height="16"><path d="M12 2v12L5 8z" fill="#aaa" stroke="#888"/></svg></button>
                    <button aria-label="Filter"><svg width="16" height="16"><path d="M2 2h12L9.500 8v6h-3V8z" fill="#777" stroke="#333"/></svg></button>
                    <button aria-label="Columns"><svg width="16" height="16"><path d="M3.500 2.500h7l3 2v10h-10z" fill="#ccc" stroke="#888"/><path d="M5.500 6.500h6v6h-6zM8.500 6v7M5 9.500h7" fill="none" stroke="#888"/></svg></button>
                    <button aria-label="Tools"><svg width="16" height="16"><path d="M2 14l7-8" stroke="#333" stroke-width="3"/><path d="M5 3l5-2 5 5v3l-3-2-3 1z" fill="#444"/></svg></button>
                </div>
                <table class="layer-list">
                    <thead>
                        <tr><th class="c-name">Name</th><th class="c-ico"></th><th class="c-ico"></th><th class="c-ico"></th><th class="c-ico"></th><th class="c-mat">Material</th></tr>
                    </thead>
                    <tbody>
                        <tr class="selected"><td><i class="exp">+</i>Building</td><td></td><td><svg><use href="#bulb-off"/></svg></td><td><svg><use href="#lock"/></svg></td><td><i class="sw"></i></td><td><i class="mat"></i></td></tr>
                        <tr><td><i class="exp">−</i>Practice ...</td><td></td><td><svg><use href="#bulb-on"/></svg></td><td><svg><use href="#lock"/></svg></td><td><i class="sw"></i></td><td><i class="mat"></i></td></tr>
                        <tr class="child"><td>Stair</td><td></td><td><svg><use href="#bulb-on"/></svg></td><td><svg><use href="#lock"/></svg></td><td><i class="sw"></i></td><td><i class="mat"></i></td></tr>
                        <tr class="child"><td>Top Rail</td><td></td><td><svg><use href="#bulb-on"/></svg></td><td><svg><use href="#lock"/></svg></td><td><i class="sw"></i></td><td><i class="mat"></i></td></tr>
                        <tr class="child"><td>Mid Rail</td><td></td><td><svg><use href="#bulb-on"/></svg></td><td><svg><use href="#lock"/></svg></td><td><i class="sw"></i></td><td><i class="mat"></i></td></tr>
                        <tr class="child"><td>Side</td><td></td><td><svg><use href="#bulb-on"/></svg></td><td><svg><use href="#lock"/></svg></td><td><i class="sw"></i></td><td><i class="mat"></i></td></tr>
                        <tr class="child"><td>Material</td><td></td><td><svg><use href="#bulb-on"/></svg></td><td><svg><use href="#lock"/></svg></td><td><i class="sw"></i></td><td><i class="mat"></i></td></tr>
                        <tr class="child current"><td>Extra</td><td><svg viewBox="0 0 12 16"><path d="M2 8l3 3 6-6" fill="none" stroke="#000" stroke-width="2"/></svg></td><td></td><td></td><td><i class="sw"></i></td><td><i class="mat"></i></td></tr>
                        <tr><td>Partition ...</td><td></td><td><svg><use href="#bulb-off"/></svg></td><td><svg><use href="#lock"/></svg></td><td><i class="sw cyan"></i></td><td><i class="mat"></i></td></tr>
                        <tr><td><i class="exp">+</i>Serpentin...</td><td></td><td><svg><use href="#bulb-off"/></svg></td><td><svg><use href="#lock"/></svg></td><td><i class="sw"></i></td><td><i class="mat"></i></td></tr>
                        <tr><td>Tile</td><td></td><td><svg><use href="#bulb-off"/></svg></td><td><svg><use href="#lock"/></svg></td><td><i class="sw"></i></td><td><i class="mat"></i></td></tr>
                        <tr><td><i class="exp">+</i>Partition ...</td><td></td><td><svg><use href="#bulb-off"/></svg></td><td><svg><use href="#lock"/></svg></td><td><i class="sw"></i></td><td><i class="mat"></i></td></tr>
                        <tr><td><i class="exp">+</i>Make2D</td><td></td><td><svg><use href="#bulb-off"/></svg></td><td><svg><use href="#lock"/></svg></td><td><i class="sw"></i></td><td><i class="mat"></i></td></tr>
                        <tr><td>Hidden</td><td></td><td><svg><use href="#bulb-off"/></svg></td><td><svg><use href="#lock"/></svg></td><td><i class="sw white"></i></td><td><i class="mat"></i></td></tr>
                    </tbody>
                </table>
                <div class="hscroll">
                    <svg width="16" height="16"><path d="M10 5L7 8l3 3" fill="none" stroke="#444" stroke-width="2"/></svg>
                    <div class="track"><div class="thumb"></div></div>
                    <svg width="16" height="16"><path d="M6 5l3 3-3 3" fill="none" stroke="#444" stroke-width="2"/></svg>
                </div>
            </div>
        </aside>
    </main>

    <section class="osnap">
        <label><input type="checkbox" checked>End</label>
        <label><input type="checkbox" checked>Near</label>
        <label><input type="checkbox">Point</label>
        <label><input type="checkbox" checked>Mid</label>
        <label><input type="checkbox" checked>Cen</label>
        <label><input type="checkbox" checked>Int</label>
        <label><input type="checkbox" checked>Perp</label>
        <label><input type="checkbox" checked>Tan</label>
        <label><input type="checkbox" checked>Quad</label>
        <label><input type="checkbox">Knot</label>
        <label><input type="checkbox" checked>Vertex</label>
        <label><input type="checkbox" class="flat">Project</label>
        <label><input type="checkbox" class="flat">Disable</label>
    </section>

    <footer class="status">
        <button class="s-cplane">CPlane</button>
        <span class="s-coord">x -38.276</span>
        <span class="s-coord">y 13.273</span>
        <span class="s-coord">z 0.000</span>
        <span class="s-coord">Inches</span>
        <button class="s-layer"><i></i>Practice Floor::Extra</button>
        <button class="s-grid">Grid Snap</button>
        <button class="s-ortho on">Ortho</button>
        <button class="s-planar">Planar</button>
        <button class="s-planar on">Osnap</button>
        <button class="s-smart on">SmartTrack</button>
        <button class="s-gumball">Gumball</button>
        <button class="s-record">Record History</button>
        <button class="s-filter">Filter</button>
        <span class="s-memory">Memory use: 474 MB</span>
    </footer>

    <div class="taskbar">
        <button class="start" aria-label="Start"><svg width="16" height="16"><path d="M0 2l6-1v6H0zM7 1l9-1v7H7zM0 8h6v7l-6-1zM7 8h9v8l-9-1z" fill="#c8c4c4"/></svg></button>
        <div class="search">
            <svg width="24" height="24"><circle cx="12" cy="12" r="9" fill="none" stroke="#fff" stroke-width="3"/></svg>
            <input type="text" placeholder="Ask me anything" aria-label="Search">
            <svg width="12" height="18"><rect x="3.500" y="1.500" width="5" height="10" rx="1" fill="none" stroke="#aaa"/><path d="M1 9v5h10V9M6 14v3" fill="none" stroke="#888"/></svg>
        </div>
        <button class="task" aria-label="Task view"><svg width="24" height="24"><path d="M6 5.500h12v13H6zM4 7.500H2.500v9H4M20 7.500h1.500v9H20" fill="none" stroke="#fff"/></svg></button>
        <button class="task" aria-label="Browser"><svg width="24" height="24"><path d="M0 0h24v24H0z" fill="#0078d7"/><g fill="none" stroke="#fff"><circle cx="12" cy="12" r="6"/><ellipse cx="12" cy="12" rx="2.500" ry="6"/><path d="M6 10h12M6 14h12"/></g></svg></button>
        <button class="task open" aria-label="File Explorer"><svg width="24" height="24"><path d="M1 3h8l2 2h11v17H1z" fill="#f5d77a"/><path d="M2 6h20v5H2z" fill="#fbe9a8"/><path d="M3 22v-9h18v9h-4v-4H7v4z" fill="#4fb4e6"/></svg></button>
        <button class="task" aria-label="Store"><svg width="24" height="24"><path d="M0 0h24v24H0z" fill="#0078d7"/><path d="M5 8l14-1v13l-14-1z" fill="#fff"/><path d="M9 8V5q3-3 5 0v3" fill="none" stroke="#fff"/><path d="M8 10h3v3H8zM12 10h4v3h-4zM8 14h3v3H8zM12 14h4v4h-4z" fill="#0078d7"/></svg></button>
        <button class="task open" aria-label="Chrome"><svg width="24" height="24"><circle cx="12" cy="12" r="11" fill="#fbc916"/><path d="M12 12L2.500 6.500A11 11 0 0 1 21.500 6.500H12z" fill="#e33b2e"/><path d="M2.500 6.500L8 15l4 3-2 5A11 11 0 0 1 2.500 6.500z" fill="#1da462"/><circle cx="12" cy="12" r="5" fill="#fff"/><circle cx="12" cy="12" r="4" fill="#4285f4"/></svg></button>
        <button class="task" aria-label="Music"><svg width="24" height="24"><path d="M0 0h24v24H0z" fill="#0078d7"/><path d="M4 4h16v16H4z" fill="#e0492c"/><path d="M7 15v-3a5 5 0 0 1 10 0v3" fill="none" stroke="#fff" stroke-width="1.500"/><path d="M8 13h2v5H8zM14 13h2v5h-2z" fill="#fff"/></svg></button>
        <button class="task" aria-label="Steam"><svg width="24" height="24"><circle cx="12" cy="12" r="11" fill="#15406e"/><path d="M2 14l6 3 7-5" fill="none" stroke="#fff" stroke-width="4"/><circle cx="15" cy="9" r="4" fill="#15406e" stroke="#fff" stroke-width="2"/><circle cx="8" cy="17" r="3" fill="#fff"/></svg></button>
        <button class="task" aria-label="Word"><svg width="24" height="24"><path d="M12 3h11v18H12z" fill="#fff" stroke="#2b579a"/><path d="M14 7h7M14 10h7M14 13h7M14 16h7" stroke="#2b579a"/><path d="M1 3l13-2v22L1 21z" fill="#2b579a"/><text x="7" y="16" class="word-text">W</text></svg></button>
        <button class="task" aria-label="Creative Cloud"><svg width="24" height="24"><path d="M1 1h22v22H1z" fill="#da1a1f"/><g fill="none" stroke="#fff" stroke-width="1.200"><circle cx="13" cy="11" r="6"/><path d="M9 17a4 4 0 0 1 0-8q2 0 6 5a3 3 0 1 0 0-5l-4 4M9 17h5"/></g></svg></button>
        <button class="task open current" aria-label="Rhinoceros"><svg width="24" height="24"><use href="#rhino"/></svg></button>
        <button class="task open" aria-label="Paint"><svg width="24" height="24"><path d="M11 4q11-1 11 9t-11 10Q1 22 1 14 2 5 11 4z" fill="#cfe4ee"/><circle cx="6" cy="12" r="2" fill="#e04030"/><circle cx="9" cy="8" r="2" fill="#40a040"/><circle cx="14" cy="8" r="2" fill="#f0b020"/><circle cx="10" cy="16" r="2" fill="#1c2027"/><path d="M14 22L20 5" stroke="#c98a48" stroke-width="2"/><path d="M18 6l1-5 4-1-1 6z" fill="#8a5a28"/></svg></button>
        <div class="tray">
            <svg width="12" height="8"><path d="M1 7h10L6 2z" fill="#fff"/></svg>
            <svg width="16" height="16"><g fill="none" stroke="#999"><path d="M2 15A13 13 0 0 1 15 3"/></g><g fill="none" stroke="#fff"><path d="M5 15A10 10 0 0 1 15 6M8 15a7 7 0 0 1 7-6M11 15q0-3 4-3"/></g><path d="M12 12h3v3h-3z" fill="#fff"/></svg>
            <svg width="16" height="16"><path d="M.5 6h3l3-3v10l-3-3h-3z" fill="none" stroke="#fff"/><path d="M9 6q1.500 2 0 4M11 4q3 4 0 8" fill="none" stroke="#fff"/><path d="M13 2q4 6 0 12" fill="none" stroke="#777"/></svg>
            <svg width="16" height="16"><path d="M0 0h16v13h-6l-2 3-2-3H0z" fill="#fff"/><path d="M3 3.500h10M3 6.500h10M3 9.500h7" stroke="#222"/></svg>
            <div class="clock"><span>3:27 PM</span><span>6/30/2015</span></div>
        </div>
    </div>
</body>
</html>
```
FILE: styles.css
```
* {
    box-sizing: border-box;
}
body {
    margin: 0;
    height: 100vh;
    display: flex;
    flex-direction: column;
    overflow: hidden;
    background-color: #dfe3eb;
    color: #111;
    font-family: "Liberation Sans", Arial, sans-serif;
    font-size: 11px;
}
button, input, select {
    font: inherit;
    color: inherit;
    border: none;
    background: none;
    padding: 0;
    margin: 0;
    outline: none;
}
svg {
    display: block;
    flex: none;
}
.defs {
    position: absolute;
}

/* title and menu */
.titlebar {
    display: flex;
    align-items: center;
    height: 22px;
    padding-left: 2px;
    background-color: #fff;
    font-family: "Open Sans", "Noto Sans", sans-serif;
}
.titlebar h1 {
    margin: 0 0 0 5px;
    font-size: 11px;
    font-weight: normal;
    flex: 1;
}
.window-buttons {
    display: flex;
    padding-right: 2px;
}
.window-buttons button {
    width: 46px;
    height: 18px;
    display: flex;
    justify-content: center;
    align-items: center;
}
.menu {
    display: flex;
    gap: 15px;
    align-items: center;
    height: 20px;
    padding: 0 7px;
    background-color: #f5f6f9;
    font-family: "Open Sans", "Noto Sans", sans-serif;
}
.menu a {
    color: #111;
    text-decoration: none;
}

/* command line */
.command {
    margin: 4px 0 4px 2px;
    padding-left: 3px;
    border-left: 3px double #b4bac6;
    font-size: 12px;
}
.history, .prompt {
    display: flex;
    justify-content: space-between;
    background-color: #fff;
    padding-right: 1px;
}
.history {
    height: 27px;
    line-height: 16px;
    border-bottom: 1px solid #9aa1ac;
}
.prompt {
    height: 19px;
    align-items: center;
    font-weight: bold;
}
.prompt input {
    flex: 1;
}
.caret {
    width: 1px;
    height: 15px;
    margin-left: 3px;
    background-color: #000;
}

/* tool tabs */
.ribbon {
    border-top: 1px solid #c2c8d2;
    padding: 4px 0 0 2px;
}
.tabs {
    display: flex;
    height: 16px;
    padding-left: 5px;
    border-bottom: 1px solid #a9afbb;
}
.tab {
    position: relative;
    isolation: isolate;
    padding: 0 8px 0 9px;
    line-height: 15px;
}
.tab::before, .tab::after {
    content: "";
    position: absolute;
    z-index: -1;
    top: 0;
    bottom: 0;
    background-color: #d3d9e8;
    border: 0 solid #a9afbb;
}
.tab::before {
    left: 4px;
    width: 10px;
    border-width: 1px 0 0 1px;
    transform: skewX(-26deg);
}
.tab::after {
    left: 9px;
    right: -1px;
    border-width: 1px 1px 0 0;
    border-radius: 0 4px 0 0;
}
.tab.active::before, .tab.active::after {
    background-color: #fff;
}
.tabs-gear {
    margin-left: auto;
    margin-right: 2px;
}
.toolbar {
    display: flex;
    height: 34px;
    padding-left: 6px;
    background-image: linear-gradient(#fcfcfd, #dfe3eb);
}
.tool {
    position: relative;
    width: 28px;
    height: 30px;
}
.tool svg, .stool svg {
    width: 100%;
    height: 100%;
}
.tool::before, .tool::after {
    content: "";
    position: absolute;
    width: 4px;
    height: 4px;
    border: 0 solid #000;
}
.tool::before {
    top: 4px;
    left: 20px;
    border-width: 1px 1px 0 0;
}
.tool::after {
    top: 22px;
    left: 2px;
    border-width: 0 0 1px 1px;
}
.tool.more, .stool.more {
    background-image: linear-gradient(135deg, transparent 50%, #666 50%);
    background-repeat: no-repeat;
    background-size: 6px 6px;
    background-position: 20px 21px;
}
.tool-sep {
    width: 1px;
    height: 30px;
    margin: 0 3px 0 2px;
    background-color: #b4bac6;
}
.id-text {
    font: bold 9px "Liberation Mono", monospace;
    text-anchor: middle;
}

/* main area */
.workspace {
    flex: 1;
    min-height: 0;
    display: flex;
    padding-top: 5px;
}
.side-tools {
    width: 64px;
    padding-left: 3px;
}
.grip {
    width: 55px;
    height: 3px;
    margin: 3px 0 1px;
    border: 1px solid #b4bac6;
    border-width: 1px 0;
}
.side-grid {
    display: grid;
    grid-template-columns: 28px 28px;
    grid-auto-rows: 28px;
}
.stool.more {
    background-position: 19px 21px;
}
.t-text {
    font: bold 25px "Liberation Serif", serif;
    text-anchor: middle;
    fill: #5f83ee;
    stroke: #112;
    stroke-width: 1px;
}
.view-area {
    flex: 1;
    min-width: 0;
    display: flex;
    flex-direction: column;
}
.viewport {
    position: relative;
    flex: 1;
    min-height: 0;
    overflow: hidden;
    background-color: #9da3aa;
}
.scene {
    width: 100%;
    height: 100%;
}
.view-label {
    position: absolute;
    top: 0;
    left: 1px;
    display: flex;
    align-items: center;
    gap: 5px;
    height: 18px;
    padding: 0 2px 0 9px;
    background-color: #8aa5c6;
    font-family: "Open Sans", "Noto Sans", sans-serif;
}
.axes {
    position: absolute;
    left: 30px;
    bottom: 27px;
    font: bold 12px "Liberation Mono", monospace;
    fill: #5f656c;
}
.view-tabs {
    display: flex;
    height: 24px;
    padding: 2px 0 2px 1px;
    font-family: "Open Sans", "Noto Sans", sans-serif;
}
.vtab {
    position: relative;
    isolation: isolate;
    min-width: 46px;
    padding: 0 7px 0 9px;
    line-height: 18px;
}
.vtab::before, .vtab::after {
    content: "";
    position: absolute;
    z-index: -1;
    top: 0;
    bottom: 0;
    background-color: #d3d9e8;
    border: 0 solid #a9afbb;
}
.vtab::before {
    left: 4px;
    width: 12px;
    border-width: 0 0 1px 1px;
    transform: skewX(24deg);
}
.vtab::after {
    left: 12px;
    right: 0;
    border-width: 0 1px 1px 0;
    border-radius: 0 0 4px 0;
}
.vtab.active::before, .vtab.active::after {
    background-color: #fff;
}
.vtab.plus {
    min-width: 32px;
    padding-left: 12px;
}
.vtab.plus::before, .vtab.plus::after {
    background-color: #e2e6ee;
}

/* side panels */
.panel {
    display: flex;
    flex-direction: column;
    margin: 4px 0;
    padding-top: 1px;
    border-top: 3px double #b4bac6;
}
.properties {
    width: 193px;
    margin-left: 8px;
}
.layers {
    width: 193px;
    margin-left: 6px;
}
.panel-tabs {
    display: flex;
    height: 20px;
}
.ptab {
    position: relative;
    isolation: isolate;
    display: flex;
    align-items: center;
    gap: 2px;
    padding: 0 6px 0 4px;
    border: 1px solid #a9afbb;
    border-width: 1px 0 0 1px;
    border-radius: 4px 0 0 0;
}
.properties .ptab {
    width: 56px;
    white-space: nowrap;
}
.ptab::before, .ptab::after {
    content: "";
    position: absolute;
    z-index: -1;
    top: -1px;
    bottom: 0;
    background-color: #d3d9e8;
    border: 0 solid #a9afbb;
}
.ptab::before {
    left: 0;
    right: 12px;
    border-width: 1px 0 0;
    border-radius: 4px 0 0 0;
}
.ptab::after {
    right: -1px;
    width: 16px;
    border-width: 1px 1px 0 0;
    transform: skewX(38deg);
}
.ptab.active {
    z-index: 1;
}
.layers .ptab::after {
    right: -8px;
}
.layers .ptab::before {
    right: 0;
}
.ptab.active::before, .ptab.active::after {
    background-color: #fff;
}
.help-text {
    font: bold 10px "Liberation Sans", sans-serif;
    text-anchor: middle;
    fill: #fff;
}
.gear {
    margin: 4px 1px 0 auto;
}
.panel-body {
    flex: 1;
    display: flex;
    flex-direction: column;
    border: 1px solid #9aa1ac;
    background-color: #f0f0f0;
}
.properties .panel-body {
    padding: 5px 6px 0 3px;
}
.modes {
    display: flex;
    gap: 4px;
    margin-bottom: 8px;
}
.mode {
    width: 26px;
    height: 26px;
    display: flex;
    align-items: center;
    justify-content: center;
    border: 1px solid #adadad;
    background-color: #e1e1e1;
}
.mode.on {
    border-color: #3f9be8;
    background-color: #cce4f7;
}
.props {
    border: 1px solid #dfe3eb;
    border-width: 1px 1px 0 1px;
}
.props h2 {
    margin: 0;
    height: 23px;
    padding-left: 3px;
    font-size: 11px;
    font-weight: normal;
    line-height: 23px;
    border-bottom: 1px solid #dfe3eb;
}
.prop {
    display: flex;
    height: 19px;
    margin-left: 8px;
    line-height: 18px;
    background-color: #fff;
    border-bottom: 1px solid #dfe3eb;
}
.name {
    width: 83px;
    padding-left: 4px;
    border-right: 1px solid #dfe3eb;
    white-space: nowrap;
    overflow: hidden;
}
.value {
    flex: 1;
    min-width: 0;
    display: flex;
    align-items: center;
    padding-left: 4px;
}
.value select {
    appearance: none;
    flex: 1;
    min-width: 0;
}
.value input[type="text"] {
    flex: 1;
    min-width: 0;
}
.swatch {
    width: 13px;
    height: 13px;
    margin-right: 4px;
    border: 1px solid #000;
    background-color: #fff;
}
.swatch.black {
    background-color: #000;
}
.diamond {
    margin-right: 4px;
}
.drop, .dots {
    width: 17px;
    height: 18px;
    border: 1px solid #b5b5b5;
    background-color: #eee;
    line-height: 12px;
}
.off {
    color: #777;
}
.off .value {
    background-color: #dfe3eb;
}
.adjust {
    flex: 1;
    height: 16px;
    margin: 0 1px 0 -2px;
    border: 1px solid #c8c8c8;
    background-color: #e6e7ea;
    line-height: 14px;
}
.spin {
    margin: 0 1px 0 auto;
}
input[type="checkbox"] {
    appearance: none;
    flex: none;
    width: 13px;
    height: 13px;
    border: 1px solid #333;
    background-color: #fff;
}
input[type="checkbox"]:checked {
    background-image: url("data:image/svg+xml,%3Csvg xmlns='http://www.w3.org/2000/svg' width='11' height='11'%3E%3Cpath d='M2 5l2.500 3L9 2' fill='none' stroke='%23000' stroke-width='2'/%3E%3C/svg%3E");
}
input[type="checkbox"]:disabled, input[type="checkbox"].flat {
    border-color: #b5b5b5;
    background-color: #e6e6e6;
}
.value label {
    margin-left: 5px;
}
.wide {
    height: 21px;
    margin: 5px 0 0 1px;
    border: 1px solid #a0a0a0;
    background-image: linear-gradient(#f0f0f0, #e2e2e2);
}
.wide + .wide {
    margin-top: 3px;
}

/* layers */
.layers .panel-body {
    background-color: #fff;
}
.layer-tools {
    display: flex;
    justify-content: space-between;
    height: 22px;
    padding: 2px 5px 0 2px;
    background-color: #f4f5f8;
    border-bottom: 1px solid #9aa1ac;
}
.layer-list {
    width: 100%;
    table-layout: fixed;
    border-collapse: collapse;
}
.layer-list th {
    height: 24px;
    padding: 0;
    font-weight: normal;
    text-align: left;
    border-right: 1px solid #e2eaf4;
    white-space: nowrap;
}
.layer-list .c-name {
    width: 79px;
    padding-left: 6px;
}
.c-ico {
    width: 17px;
}
.layer-list .c-mat {
    padding-left: 6px;
    border-right: none;
}
.layer-list td {
    height: 17px;
    padding: 0;
    border-bottom: 1px dotted #ddd;
    white-space: nowrap;
}
.layer-list td:first-child {
    padding-left: 21px;
}
.layer-list .child td:first-child {
    padding-left: 35px;
}
.layer-list svg {
    width: 12px;
    height: 15px;
    margin-left: 2px;
}
.selected {
    background-color: #3399ff;
    color: #fff;
}
.current td {
    font-weight: bold;
}
.exp {
    float: left;
    width: 9px;
    height: 9px;
    margin: 2px 0 0 -15px;
    border: 1px solid #8a95a5;
    background-color: #f3f5f8;
    color: #000;
    font: bold 9px/7px "Liberation Sans", sans-serif;
    text-align: center;
}
.sw {
    display: block;
    width: 12px;
    height: 12px;
    margin-left: 3px;
    border: 1px solid #000;
    background-color: #000;
}
.selected .sw {
    border-color: #fff;
}
.sw.cyan {
    background-color: #00ffff;
}
.sw.white {
    background-color: #fff;
}
.mat {
    display: block;
    width: 12px;
    height: 12px;
    margin-left: 3px;
    border: 1px solid #e8e8e8;
    border-radius: 50%;
    background-color: #fff;
}
.hscroll {
    display: flex;
    height: 16px;
    margin-top: auto;
    background-color: #f0f0f0;
}
.track {
    flex: 1;
}
.thumb {
    width: 47%;
    height: 15px;
    background-color: #cdcdcd;
}

/* osnap and status */
.osnap {
    display: flex;
    gap: 6px;
    height: 30px;
    margin: 3px 0 3px 3px;
    padding-left: 5px;
    border-left: 3px double #b4bac6;
}
.osnap label {
    display: flex;
    align-items: center;
    gap: 5px;
    height: 24px;
}
.status {
    display: flex;
    height: 20px;
    border-top: 1px solid #9aa1ac;
    font-size: 12px;
}
.status > * {
    border-right: 1px solid #9aa1ac;
    line-height: 20px;
    text-align: center;
    white-space: nowrap;
}
.status .on {
    background-color: #e2f2fd;
    font-weight: bold;
}
.s-cplane {
    width: 57px;
}
.s-coord {
    width: 88px;
}
.status .s-layer {
    display: flex;
    align-items: center;
    gap: 2px;
    width: 173px;
    padding-left: 3px;
}
.s-layer i {
    width: 14px;
    height: 14px;
    background-color: #000;
}
.s-grid {
    width: 76px;
}
.s-ortho {
    width: 47px;
}
.s-planar {
    width: 54px;
}
.s-smart {
    width: 85px;
}
.s-gumball {
    width: 66px;
}
.s-record {
    width: 109px;
}
.s-filter {
    width: 45px;
}
.status .s-memory {
    flex: 1;
    margin-right: 7px;
    padding-left: 3px;
    text-align: left;
}

/* taskbar */
.taskbar {
    display: flex;
    height: 40px;
    background-image: linear-gradient(90deg, #1a0f11 30%, #1c2027 34%, #171a21 68%, #1a1011 74%);
    color: #fff;
    font-family: "Open Sans", "Noto Sans", sans-serif;
}
.start {
    width: 48px;
    display: flex;
    align-items: center;
    justify-content: center;
}
.search {
    display: flex;
    align-items: center;
    width: 344px;
    padding: 0 14px 0 8px;
    background-color: #404040;
}
.search input {
    flex: 1;
    margin-left: 8px;
    font-size: 14px;
}
.search input::placeholder {
    color: #a6a6a6;
    opacity: 1;
}
.task {
    width: 49px;
    display: flex;
    align-items: center;
    justify-content: center;
}
.task.open {
    background-image: linear-gradient(#4a98dc, #4a98dc);
    background-repeat: no-repeat;
    background-size: 40px 2px;
    background-position: center bottom;
}
.task.current {
    background-color: #34373c;
    background-size: 49px 2px;
}
.word-text {
    font: bold 10px "Liberation Sans", sans-serif;
    text-anchor: middle;
    fill: #fff;
}
.tray {
    display: flex;
    align-items: center;
    gap: 7px;
    margin-left: auto;
    margin-right: 4px;
    border-right: 1px solid #555;
    padding-right: 3px;
}
.tray svg:first-child {
    margin-right: 4px;
}
.clock {
    display: flex;
    flex-direction: column;
    align-items: center;
    width: 64px;
    font-size: 11px;
    line-height: 18px;
}
```
